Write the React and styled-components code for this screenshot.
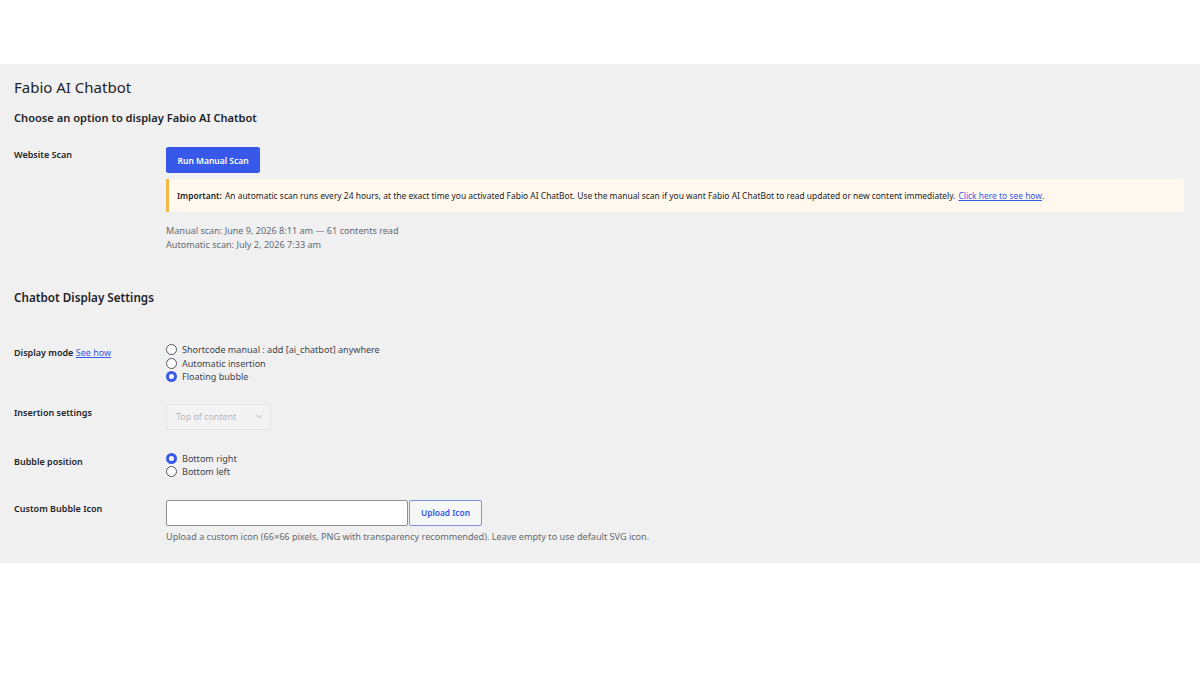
import styled, { createGlobalStyle } from "styled-components";

const GlobalStyle = createGlobalStyle`
  body {
    margin: 0;
    background: #ffffff;
    font-family: 'Noto Sans', 'Open Sans', sans-serif;
    color: #1d2327;
  }
`;

const Page = styled.div`
  width: 1200px;
  height: 675px;
  padding-top: 64px;
  box-sizing: border-box;
`;

const Panel = styled.div`
  background: #f0f0f1;
  padding: 12px 16px 19px 14px;
`;

const Title = styled.h1`
  margin: 0;
  font-size: 15px;
  line-height: 23px;
  font-weight: 400;
`;

const Heading = styled.h2`
  margin: ${props => props.$top}px 0 0;
  font-size: ${props => props.$size}px;
  line-height: 18px;
  font-weight: 600;
`;

const Row = styled.div`
  display: grid;
  grid-template-columns: 152px 1fr;
  margin-top: ${props => props.$top}px;
`;

const Label = styled.div`
  font-size: 9px;
  line-height: 14px;
  font-weight: 600;
  padding-top: ${props => props.$pad}px;
`;

const Link = styled.a`
  color: #3858e9;
  font-weight: 400;
  text-decoration: underline;
`;

const Content = styled.div`
  display: flex;
  flex-direction: column;
  align-items: flex-start;
`;

const PrimaryButton = styled.button`
  height: 26px;
  padding: 0 10.5px;
  background: #3858e9;
  color: #fff;
  border: 1px solid #3858e9;
  border-radius: 2px;
  font-family: inherit;
  font-size: 8.5px;
  font-weight: 600;
`;

const Notice = styled.div`
  align-self: stretch;
  margin-top: 6px;
  height: 33px;
  display: flex;
  align-items: center;
  padding-left: 8px;
  background: #fef8ee;
  border-left: 3px solid #f0b849;
  font-size: 8.45px;
  color: #1d2327;
  white-space: nowrap;

  strong {
    font-weight: 600;
    margin-right: 3px;
  }
  a {
    color: #3858e9;
    margin-left: 3px;
  }
`;

const Meta = styled.div`
  margin-top: ${props => props.$top || 0}px;
  font-size: 9.1px;
  line-height: 14px;
  color: #646970;
`;

const Radios = styled.div`
  display: flex;
  flex-direction: column;
`;

const RadioRow = styled.label`
  display: flex;
  align-items: center;
  height: 13.5px;
  font-size: 9.05px;
  color: #3c434a;
`;

const Dot = styled.span`
  width: 11px;
  height: 11px;
  box-sizing: border-box;
  border-radius: 50%;
  background: #fff;
  border: ${props => props.$on ? "3.2px solid #3858e9" : "1px solid #50575e"};
  margin-right: 5px;
  flex-shrink: 0;
`;

const Select = styled.div`
  width: 105px;
  height: 26px;
  box-sizing: border-box;
  border: 1px solid #e2e4e7;
  border-radius: 2px;
  background: #f3f3f4;
  display: flex;
  align-items: center;
  justify-content: space-between;
  padding: 0 6px 0 9px;
  font-size: 8.9px;
  color: #b4b8bc;
`;

const UploadLine = styled.div`
  display: flex;
`;

const TextInput = styled.div`
  width: 242px;
  height: 26px;
  box-sizing: border-box;
  background: #fff;
  border: 1px solid #8c8f94;
  border-radius: 2px;
`;

const SecondaryButton = styled.button`
  width: 73px;
  height: 26px;
  margin-left: 1px;
  background: #f6f7f7;
  border: 1px solid #7b90e6;
  border-radius: 2px;
  color: #3858e9;
  font-family: inherit;
  font-size: 8.4px;
  font-weight: 600;
`;

const Radio = ({ on, children }) => (
  <RadioRow>
    <Dot $on={on} />
    {children}
  </RadioRow>
);

export default function App() {
  return (
    <Page>
      <GlobalStyle />
      <Panel>
        <Title>Fabio AI Chatbot</Title>
        <Heading $top={10} $size={11.1}>Choose an option to display Fabio AI Chatbot</Heading>

        <Row $top={20}>
          <Label $pad={1}>Website Scan</Label>
          <Content>
            <PrimaryButton>Run Manual Scan</PrimaryButton>
            <Notice>
              <strong>Important:</strong> An automatic scan runs every 24 hours, at the exact time you activated Fabio AI ChatBot. Use the manual scan if you want Fabio AI ChatBot to read updated or new content immediately.
              <a href="#">Click here to see how</a>.
            </Notice>
            <Meta $top={12}>Manual scan: June 9, 2026 8:11 am — 61 contents read</Meta>
            <Meta>Automatic scan: July 2, 2026 7:33 am</Meta>
          </Content>
        </Row>

        <Heading $top={36} $size={11.7}>Chatbot Display Settings</Heading>

        <Row $top={37}>
          <Label $pad={3}>
            Display mode <Link href="#">See how</Link>
          </Label>
          <Radios>
            <Radio>Shortcode manual : add [ai_chatbot] anywhere</Radio>
            <Radio>Automatic insertion</Radio>
            <Radio on>Floating bubble</Radio>
          </Radios>
        </Row>

        <Row $top={20}>
          <Label $pad={2}>Insertion settings</Label>
          <Content>
            <Select>
              Top of content
              <svg width="9" height="9" viewBox="0 0 10 10">
                <path d="M2 3.5 L5 6.5 L8 3.5" fill="none" stroke="#a7aaad" strokeWidth="1.1" />
              </svg>
            </Select>
          </Content>
        </Row>

        <Row $top={22}>
          <Label $pad={3}>Bubble position</Label>
          <Radios>
            <Radio on>Bottom right</Radio>
            <Radio>Bottom left</Radio>
          </Radios>
        </Row>

        <Row $top={21}>
          <Label $pad={2}>Custom Bubble Icon</Label>
          <Content>
            <UploadLine>
              <TextInput />
              <SecondaryButton>Upload Icon</SecondaryButton>
            </UploadLine>
            <Meta $top={4}>Upload a custom icon (66×66 pixels, PNG with transparency recommended). Leave empty to use default SVG icon.</Meta>
          </Content>
        </Row>
      </Panel>
    </Page>
  );
}
